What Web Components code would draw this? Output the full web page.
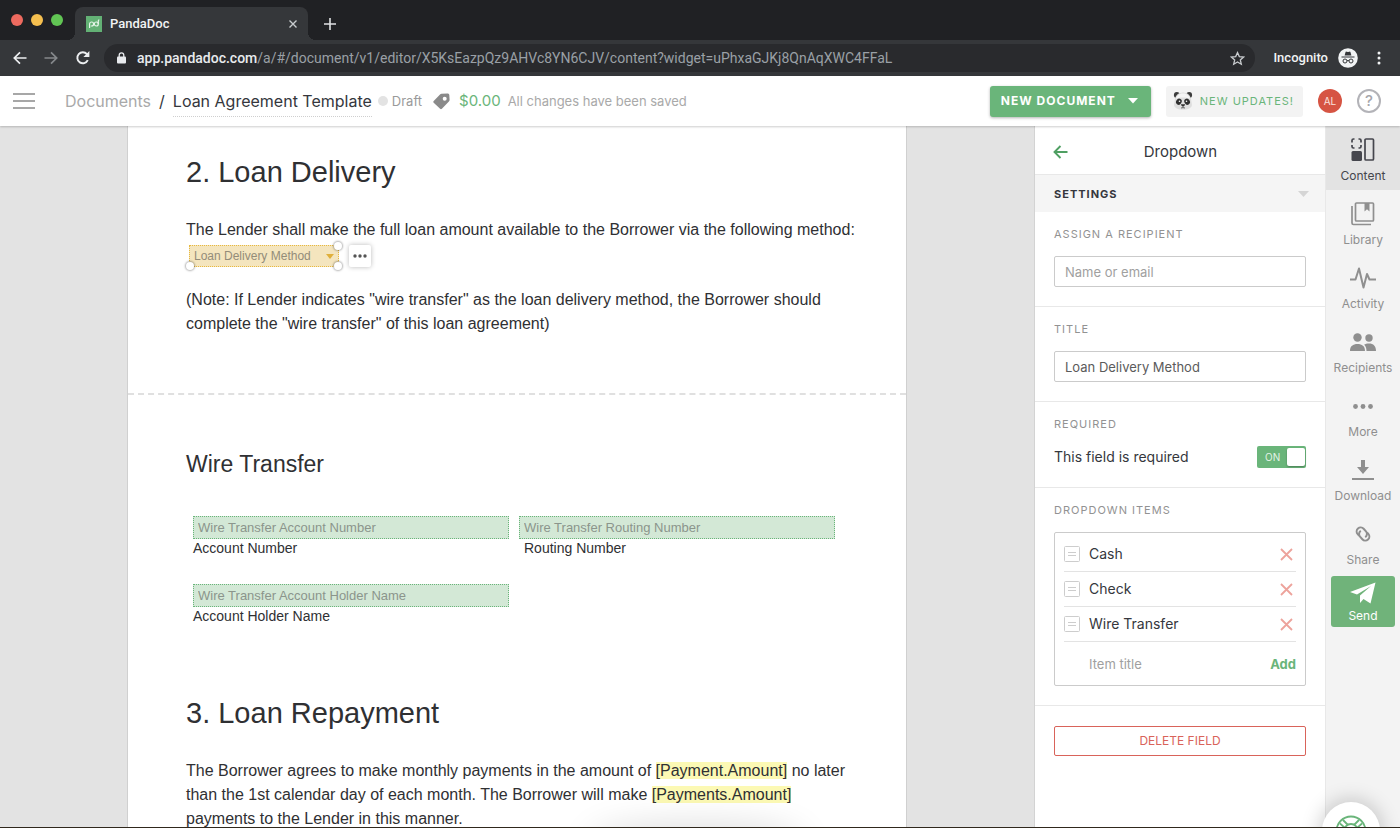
<!DOCTYPE html>
<html lang="en">
<head>
<meta charset="utf-8">
<meta name="viewport" content="width=device-width, initial-scale=1">
<title>PandaDoc</title>
<style>
  :root {
    --green: #6ab57a;
    --grey: #8f8f8f;
    --line: #e8e8e8;
    --ink: #35373d;
    --ui: Inter, "Liberation Sans", sans-serif;
    --chrome: Roboto, "Liberation Sans", sans-serif;
    --doc: "Liberation Sans", Arial, sans-serif;
  }
  html, body { height: 100%; margin: 0; }
  body { background: #30281d; font: 14px/20px var(--ui); color: var(--ink); overflow: hidden; }
</style>
</head>
<body>
<app-window>
  <browser-bar slot="browser" tab-title="PandaDoc" host-name="app.pandadoc.com" path="/a/#/document/v1/editor/X5KsEazpQz9AHVc8YN6CJV/content?widget=uPhxaGJKj8QnAqXWC4FFaL"></browser-bar>
  <app-header slot="header"></app-header>
  <doc-page slot="document"></doc-page>
  <field-panel slot="panel">
    <panel-section label="Assign a recipient"><text-field label="Assign a recipient" placeholder="Name or email"></text-field></panel-section>
    <panel-section label="Title"><text-field label="Title" value="Loan Delivery Method"></text-field></panel-section>
    <panel-section label="Required"><toggle-row>This field is required</toggle-row></panel-section>
    <panel-section label="Dropdown items">
      <item-list>
        <item-row>Cash</item-row>
        <item-row>Check</item-row>
        <item-row>Wire Transfer</item-row>
      </item-list>
    </panel-section>
  </field-panel>
  <nav-rail slot="rail">
    <rail-item icon="content" active>Content</rail-item>
    <rail-item icon="library">Library</rail-item>
    <rail-item icon="activity">Activity</rail-item>
    <rail-item icon="recipients">Recipients</rail-item>
    <rail-item icon="more">More</rail-item>
    <rail-item icon="download">Download</rail-item>
    <rail-item icon="share">Share</rail-item>
    <rail-item icon="send" primary>Send</rail-item>
  </nav-rail>
  <help-bubble slot="help"></help-bubble>
</app-window>

<script>
const RESET = `:host,*{box-sizing:border-box} button,input,select{font:inherit;color:inherit;margin:0} button{border:0;background:none;padding:0;cursor:pointer} svg{display:block;flex:none} a{color:inherit;text-decoration:none}`;

class Base extends HTMLElement {
  constructor() {
    super();
    this.attachShadow({ mode: 'open' });
  }
  connectedCallback() {
    this.shadowRoot.innerHTML = `<style>${RESET}${this.css()}</style>${this.html()}`;
  }
  attr(name) { return this.getAttribute(name) || ''; }
}

customElements.define('app-window', class extends Base {
  css() { return `
    :host{display:flex;flex-direction:column;height:calc(100vh - 1px);background:#e3e3e3;position:relative;overflow:hidden}
    .work{display:flex;flex:1;min-height:0}
    main{flex:1;min-width:0;overflow:hidden;display:flex;justify-content:center;position:relative}
    .glow{position:absolute;left:50%;bottom:-30px;width:200px;height:24px;border-radius:50%;box-shadow:0 0 36px 8px rgba(0,0,0,.14);transform:translateX(80px)}
  `; }
  html() { return `
    <slot name="browser"></slot><slot name="header"></slot>
    <div class="work"><main><slot name="document"></slot><div class="glow"></div></main><slot name="panel"></slot><slot name="rail"></slot></div>
    <slot name="help"></slot>`; }
});

customElements.define('browser-bar', class extends Base {
  css() { return `
    :host{display:block;flex:none;background:#202124;color:#f1f3f4;font-family:var(--chrome)}
    .tabs{display:flex;height:40px;padding:7px 0 0 11px;align-items:stretch}
    .lights{display:flex;gap:8px;padding-top:7px;width:64px}
    .lights i{width:12px;height:12px;border-radius:50%}
    .tab{display:flex;align-items:center;width:233px;padding:0 10px 0 11px;background:#35373a;border-radius:8px 8px 0 0;font-size:13px;font-weight:500;position:relative}
    .tab:before,.tab:after{content:"";position:absolute;bottom:0;width:8px;height:8px}
    .tab:before{left:-8px;background:radial-gradient(circle at 0 0,transparent 8px,#35373a 8px)}
    .tab:after{right:-8px;background:radial-gradient(circle at 100% 0,transparent 8px,#35373a 8px)}
    .fav{margin-right:8px}
    .name{flex:1}
    .plus{margin-left:15px}
    .bar{display:flex;align-items:center;height:36px;background:#35373a;padding:0 13px;}
    .nav{display:flex;gap:17px;width:91px}
    .address{flex:1;min-width:0;display:flex;align-items:center;height:28px;border-radius:14px;background:#292a2d;padding:0 10px 0 12px;font-size:14px;color:#9aa0a6;white-space:nowrap}
    .address b{font-weight:500;color:#e8eaed}
    .url{flex:1;overflow:hidden;padding-left:10px}
    .inc{font-size:13px;font-weight:500;margin:0 10px 0 18px}
    .dots{margin-left:13px}
  `; }
  html() { return `
    <div class="tabs">
      <div class="lights"><i style="background:#ed6a5f"></i><i style="background:#f5bf4f"></i><i style="background:#61c554"></i></div>
      <div class="tab">
        <svg class="fav" width="16" height="16" viewBox="0 0 16 16"><path fill="#63b175" d="M0 0h16v16H0z"/><g fill="none" stroke="#e6f5e9" stroke-width="1.2"><path d="M3.6 12V8a2 2 0 1 1 2 2H4.800"/><circle cx="10.300" cy="8" r="2"/><path d="M12.300 8V4.800c0-.8.300-1 1-1"/></g></svg>
        <span class="name">${this.attr('tab-title')}</span>
        <button aria-label="Close tab"><svg width="10" height="10" viewBox="0 0 10 10"><path d="M1.500 1.500l7 7m0-7l-7 7" stroke="#c9cccf" stroke-width="1.400"/></svg></button>
      </div>
      <button class="plus" aria-label="New tab"><svg width="14" height="14" viewBox="0 0 14 14"><path d="M7 1v12M1 7h12" stroke="#dfe1e3" stroke-width="1.600"/></svg></button>
    </div>
    <div class="bar">
      <div class="nav">
        <button aria-label="Back"><svg width="14" height="16" viewBox="0 0 14 16"><path d="M13.500 8H1.500M7 2.300L1.300 8 7 13.700" fill="none" stroke="#eceef0" stroke-width="1.700"/></svg></button>
        <button aria-label="Forward"><svg width="14" height="16" viewBox="0 0 14 16"><path d="M.5 8h12M7 2.300L12.700 8 7 13.700" fill="none" stroke="#85888b" stroke-width="1.700"/></svg></button>
        <button aria-label="Reload"><svg width="16" height="16" viewBox="0 0 16 16"><path d="M12.800 10.200A5.500 5.500 0 1 1 12 4.200L13.200 5.400" fill="none" stroke="#eceef0" stroke-width="1.900"/><path d="M14.400 1v6H8.400z" fill="#eceef0"/></svg></button>
      </div>
      <div class="address">
        <svg width="11" height="12" viewBox="0 0 11 12"><rect x="1" y="4.500" width="9" height="7" rx="1" fill="#e8eaed"/><path d="M3.200 5V3.200a2.300 2.300 0 0 1 4.600 0V5" fill="none" stroke="#e8eaed" stroke-width="1.300"/></svg>
        <span class="url"><b>${this.attr('host-name')}</b>${this.attr('path')}</span>
        <button aria-label="Bookmark"><svg width="15" height="15" viewBox="0 0 15 15"><path d="M7.500 1.600l1.800 4 4.300.4-3.300 2.900 1 4.300-3.800-2.300-3.800 2.300 1-4.300L1.400 6l4.300-.4z" fill="none" stroke="#c9cccf" stroke-width="1.300"/></svg></button>
      </div>
      <span class="inc">Incognito</span>
      <svg width="20" height="20" viewBox="0 0 20 20"><circle cx="10" cy="10" r="9.800" fill="#f1f3f4"/><path d="M6.600 7.400L7.500 4.200c.1-.5.500-.7 1-.5l1.500.4 1.500-.4c.5-.2.900 0 1 .5l.9 3.200zM3.500 8.400h13v1.100h-13z" fill="#35373a"/><g fill="none" stroke="#35373a"><circle cx="7" cy="13" r="2"/><circle cx="13" cy="13" r="2"/><path d="M9 12.800q1-.7 2 0"/></g></svg>
      <svg class="dots" width="16" height="16" viewBox="0 0 16 16" fill="#f1f3f4"><circle cx="8" cy="3" r="1.500"/><circle cx="8" cy="8" r="1.500"/><circle cx="8" cy="13" r="1.500"/></svg>
    </div>`; }
});

customElements.define('app-header', class extends Base {
  css() { return `
    :host{display:flex;flex:none;align-items:center;height:50px;padding:0 19px 0 13px;background:#fff;box-shadow:0 1px 2px rgba(0,0,0,.2);position:relative;z-index:2;white-space:nowrap}
    .crumb{margin-left:30px;font-size:16px;color:#a9a9a9}
    .sep{margin:0 8px;font-size:16px}
    h1{margin:0;font-size:16px;font-weight:400;line-height:32px;height:32px;border-bottom:1px dotted #cfcfcf}
    .status{display:flex;align-items:center;gap:4px;margin-left:6px;font-size:13px;color:#9a9a9a}
    .status i{width:10px;height:10px;border-radius:50%;background:#e3e3e3}
    .tag{margin-left:11px}
    .price{margin-left:9px;font-size:15px;color:var(--green)}
    .saved{margin-left:7px;font-size:13px;color:#a9a9a9;flex:1}
    .new{display:flex;align-items:center;gap:12px;height:31px;padding:0 13px 0 11px;background:var(--green);border-radius:3px;color:#fff;font-size:12px;font-weight:700;letter-spacing:1px;box-shadow:0 1px 3px rgba(0,0,0,.3)}
    .upd{display:flex;align-items:center;gap:7px;height:31px;margin-left:15px;padding:0 9px 0 7px;background:#f3f3f3;border-radius:3px;color:var(--green);font-size:11px;letter-spacing:1px}
    .me{width:24px;height:24px;margin-left:15px;border-radius:50%;background:#d65443;color:#fbe3df;font-size:10px}
    .q{width:24px;height:24px;margin-left:15px;border:2px solid #b3b3b8;border-radius:50%;color:#a6a6ab;font-size:15px;font-weight:500;line-height:20px}
  `; }
  html() { return `
    <button aria-label="Menu"><svg width="22" height="18" viewBox="0 0 22 18"><path d="M0 2h22M0 9h22M0 16h22" stroke="#8a8a8a" stroke-width="1.700"/></svg></button>
    <a class="crumb" href="#documents">Documents</a><span class="sep">/</span><h1>Loan Agreement Template</h1>
    <span class="status"><i></i>Draft</span>
    <svg class="tag" width="17" height="17" viewBox="0 0 17 17"><path fill-rule="evenodd" d="M8.500.8l6-.3c1 0 1.600.5 1.800 1.500l.3 4.800c0 .7-.2 1.200-.7 1.700l-7 7.200c-.6.600-1.200.6-1.800 0L.7 9.700c-.6-.6-.6-1.200 0-1.800L7 1.500c.4-.4.900-.7 1.500-.7zm3.200 3a2 2 0 1 0 0 4 2 2 0 0 0 0-4z" fill="#8a8a8a"/></svg>
    <span class="price">$0.00</span><span class="saved">All changes have been saved</span>
    <button class="new">NEW DOCUMENT<svg width="10" height="6" viewBox="0 0 10 6"><path d="M0 0h10L5 5.500z" fill="#fff"/></svg></button>
    <button class="upd"><svg width="20" height="20" viewBox="0 0 20 20"><g fill="#3c3c3c"><circle cx="3.800" cy="4" r="2.900"/><circle cx="16.200" cy="4" r="2.900"/></g><path d="M10 1.500c4.900 0 8 3.500 8.300 8.200.2 2.500 1 3.500.5 5C18 17.400 14 18.700 10 18.700S2 17.400 1.200 14.700c-.5-1.500.3-2.500.5-5C2 5 5.100 1.500 10 1.500z" fill="#dedede"/><path d="M10 2.500c4 0 6.500 2.500 7 5.500-2-2-12-2-14 0 .5-3 3-5.500 7-5.500z" fill="#f5f5f5"/><g fill="#303030"><ellipse cx="5.900" cy="10.700" rx="2.700" ry="3.200" transform="rotate(30 5.900 10.700)"/><ellipse cx="14.100" cy="10.700" rx="2.700" ry="3.200" transform="rotate(-30 14.100 10.700)"/><path d="M8 13.200h4c0 1.400-1 2-2 2s-2-.6-2-2z"/></g><path d="M10 15v1.500m-2 .3q1 .6 2-.3 1 .900 2 .3" fill="none" stroke="#444" stroke-width=".8"/><circle cx="6.500" cy="10.200" r=".8" fill="#fff"/><circle cx="13.500" cy="10.200" r=".8" fill="#fff"/></svg>NEW UPDATES!</button>
    <button class="me">AL</button>
    <button class="q" aria-label="Help">?</button>`; }
});

customElements.define('doc-page', class extends Base {
  css() { return `
    :host{display:block;width:780px;max-width:100%;padding:26px 48px 0 58px;background:#fff;border:solid #d0d0d0;border-width:0 1px;font:16px/24px var(--doc);color:#2f3033}
    h2{margin:0;font-size:29px;font-weight:400;line-height:40px}
    h3{margin:53px 0 36px;font-size:23px;font-weight:400;line-height:32px}
    p{margin:26px 0 0}
    h2.next{margin-top:68px}
    .pick{display:flex;align-items:flex-start;gap:10px;margin:3px 0 0 3px;height:23px}
    .note{margin-top:20px}
    hr{margin:57px -48px 0 -58px;border:0;border-top:2px dashed #e0e0e0}
    .grid{display:grid;grid-template-columns:repeat(auto-fill,316px);gap:27px 10px;margin-left:7px}
    mark{background:#fcf9b4;color:inherit}
  `; }
  html() { return `
    <h2>2. Loan Delivery</h2>
    <p>The Lender shall make the full loan amount available to the Borrower via the following method:</p>
    <div class="pick"><doc-dropdown label="Loan Delivery Method"></doc-dropdown><more-button></more-button></div>
    <p class="note">(Note: If Lender indicates "wire transfer" as the loan delivery method, the Borrower should complete the "wire transfer" of this loan agreement)</p>
    <hr>
    <h3>Wire Transfer</h3>
    <div class="grid">
      <doc-field placeholder="Wire Transfer Account Number">Account Number</doc-field>
      <doc-field placeholder="Wire Transfer Routing Number" indent>Routing Number</doc-field>
      <doc-field placeholder="Wire Transfer Account Holder Name">Account Holder Name</doc-field>
    </div>
    <h2 class="next">3. Loan Repayment</h2>
    <p>The Borrower agrees to make monthly payments in the amount of <mark>[Payment.Amount]</mark> no later than the 1st calendar day of each month. The Borrower will make <mark>[Payments.Amount]</mark> payments to the Lender in this manner.</p>`; }
});

customElements.define('doc-dropdown', class extends Base {
  css() { return `
    :host{display:block;position:relative;width:150px;height:22px}
    select{display:block;appearance:none;width:100%;height:22px;padding:0 4px;border:1px dotted #e8b93f;border-radius:0;background:#f4e5be;color:#938c79;font:12px/18px var(--doc)}
    svg{position:absolute;right:5px;top:9px;pointer-events:none}
    i{position:absolute;width:8px;height:8px;border-radius:50%;background:#fff;box-shadow:0 0 2px 1px rgba(0,0,0,.3)}
    .a{right:-3px;top:-3px}.b{right:-3px;bottom:-3px}.c{left:-3px;bottom:-3px}
  `; }
  html() { return `<select aria-label="${this.attr('label')}"><option>${this.attr('label')}</option></select>
    <svg width="8" height="5" viewBox="0 0 8 5"><path d="M0 0h8L4 5z" fill="#e0b03c"/></svg><i class="a"></i><i class="b"></i><i class="c"></i>`; }
});

customElements.define('more-button', class extends Base {
  css() { return `:host{display:block} button{display:grid;place-items:center;width:22px;height:22px;background:#fff;border-radius:2px;box-shadow:0 0 5px rgba(0,0,0,.28)}`; }
  html() { return `<button aria-label="Field options"><svg width="14" height="4" viewBox="0 0 14 4" fill="#555"><circle cx="2" cy="2" r="1.700"/><circle cx="7" cy="2" r="1.700"/><circle cx="12" cy="2" r="1.700"/></svg></button>`; }
});

customElements.define('doc-field', class extends Base {
  css() { return `
    :host{display:block}
    label{display:block;font-size:14px;line-height:18px}
    input{display:block;width:100%;height:23px;padding:0 4px;border:1px dotted #6ab57a;background:#d3e8d6;font-size:13px;line-height:18px}
    input::placeholder{color:#8b958c;opacity:1}
    :host([indent]) span{padding-left:5px}
  `; }
  html() { return `<label><input placeholder="${this.attr('placeholder')}"><span><slot></slot></span></label>`; }
});

customElements.define('field-panel', class extends Base {
  css() { return `
    :host{display:block;flex:none;width:292px;background:#fff;border-left:1px solid #d3d3d3;border-right:1px solid var(--line);overflow:hidden}
    header{display:flex;align-items:center;height:49px;padding:3px 18px 0;border-bottom:1px solid var(--line);font-size:15px}
    h2{flex:1;margin:0;padding-right:14px;text-align:center;font-size:15px;font-weight:400}
    .set{display:flex;align-items:center;justify-content:space-between;width:100%;height:37px;padding:0 16px 0 19px;background:#f5f5f5;font-size:11px;font-weight:700;letter-spacing:1px}
    .del{display:block;width:calc(100% - 38px);height:30px;margin:20px 19px;border:1px solid #d9635a;border-radius:2px;color:#d9635a;font-size:12px}
  `; }
  html() { return `
    <header><button aria-label="Back"><svg width="15" height="14" viewBox="0 0 15 14"><path d="M14.500 7H1.500M7.500 1L1.500 7l6 6" fill="none" stroke="#4f9f62" stroke-width="1.900"/></svg></button><h2>Dropdown</h2></header>
    <button class="set">SETTINGS<svg width="11" height="6" viewBox="0 0 11 6"><path d="M0 0h11L5.500 6z" fill="#d5d5d5"/></svg></button>
    <slot></slot>
    <button class="del">DELETE FIELD</button>`; }
});

customElements.define('panel-section', class extends Base {
  css() { return `
    :host{display:block;padding:14px 19px 19px;border-bottom:1px solid var(--line)}
    h3{margin:0 0 14px;font-size:11px;line-height:16px;font-weight:400;letter-spacing:1px;color:#929292}
  `; }
  html() { return `<h3>${this.attr('label').toUpperCase()}</h3><slot></slot>`; }
});

customElements.define('text-field', class extends Base {
  css() { return `
    :host{display:block}
    input{display:block;width:100%;height:31px;padding:0 10px;border:1px solid #cbcbcb;border-radius:2px;background:#fff;font-size:13px;color:#5b5b5b}
    input::placeholder{color:#a0a0a0;opacity:1}
  `; }
  html() { return `<input aria-label="${this.attr('label')}" placeholder="${this.attr('placeholder')}" value="${this.attr('value')}">`; }
});

customElements.define('toggle-row', class extends Base {
  css() { return `
    :host{display:block}
    label{display:flex;align-items:center;justify-content:space-between;height:22px;font-size:14px}
    .sw{position:relative;display:flex;align-items:center;width:49px;height:22px;padding-left:8px;background:var(--green);border-radius:2px;color:#e4f3e7;font-size:10px}
    input{appearance:none;position:absolute;right:1px;top:2px;width:18px;height:18px;background:#fff;border-radius:2px;box-shadow:0 1px 2px rgba(0,0,0,.3)}
  `; }
  html() { return `<label><span><slot></slot></span><span class="sw">ON<input type="checkbox" checked></span></label>`; }
});

customElements.define('item-list', class extends Base {
  css() { return `
    :host{display:block;padding:4px 9px 0;border:1px solid #cbcbcb;border-radius:2px}
    .add{display:flex;align-items:center;height:43px;padding-left:25px}
    input{flex:1;min-width:0;padding:0;border:0;font-size:13px;background:none}
    input::placeholder{color:#a0a0a0;opacity:1}
    button{font-size:13px;font-weight:700;color:var(--green)}
  `; }
  html() { return `<slot></slot><div class="add"><input aria-label="Item title" placeholder="Item title"><button>Add</button></div>`; }
});

customElements.define('item-row', class extends Base {
  css() { return `
    :host{display:flex;align-items:center;height:35px;border-bottom:1px solid #e3e3e3;font-size:14px}
    span{flex:1;padding-left:9px}
    button{margin-right:3px}
  `; }
  html() { return `<svg width="16" height="16" viewBox="0 0 16 16"><rect x=".5" y=".5" width="15" height="15" rx="1" fill="#fff" stroke="#cdcdcd"/><path d="M4 6.500h8M4 9.500h8" stroke="#cdcdcd"/></svg><span><slot></slot></span>
    <button aria-label="Remove item"><svg width="13" height="13" viewBox="0 0 13 13"><path d="M1 1l11 11M12 1L1 12" stroke="#eda39c" stroke-width="1.800"/></svg></button>`; }
});

customElements.define('nav-rail', class extends Base {
  css() { return `:host{display:block;flex:none;width:74px;background:#f3f3f3}`; }
  html() { return `<nav><slot></slot></nav>`; }
});

const ICONS = {
  content: '<g fill="none" stroke="currentColor" stroke-width="1.700"><rect x="15" y="2" width="8.500" height="21" rx="1"/><path d="M2 5.500V3.500Q2 2 3.500 2H4.500M8.500 2h1q1.500 0 1.500 1.500v2M11 8v1.500q0 1.500-1.500 1.500h-1M4.500 11h-1Q2 11 2 9.500V8"/></g><rect x="1.500" y="14" width="10.500" height="10" rx="1.500" fill="currentColor"/>',
  library: '<g fill="none" stroke="currentColor" stroke-width="1.700"><rect x="5.500" y="2" width="18" height="18" rx="1"/><path d="M2 5v17q0 1.500 1.500 1.500H21"/></g><path d="M14.500 2h5v8.500L17 8.200l-2.500 2.300z" fill="currentColor"/>',
  activity: '<path d="M0 14.500H5.500L9 3.500l4.500 19L17 9l2.500 5.500H26" fill="none" stroke="currentColor" stroke-width="2" stroke-linejoin="round"/>',
  recipients: '<g fill="currentColor"><circle cx="7.500" cy="8.500" r="4.200"/><circle cx="19" cy="9" r="3.700"/><path d="M0 22c0-5 3-7 7.500-7s7.500 2 7.500 7zM16.500 22c0-3-.9-5-2.400-6.300 1.200-.9 2.900-1.200 4.900-1.200 4.500 0 7 2.500 7 7.500z"/></g>',
  more: '<g fill="currentColor"><circle cx="5.500" cy="13.500" r="2.400"/><circle cx="13" cy="13.500" r="2.400"/><circle cx="20.500" cy="13.500" r="2.400"/></g>',
  download: '<path d="M11 3h4v7h4l-6 7-6-7h4zM2 21h22v2H2z" fill="currentColor"/>',
  share: '<g transform="rotate(48 13 13)" fill="none" stroke="currentColor" stroke-width="2"><path d="M11.500 17H9.500a4 4 0 0 1 0-8H13a4 4 0 0 1 3.900 4.500"/><path d="M14.500 9H16.500a4 4 0 0 1 0 8H13a4 4 0 0 1-3.900-4.500"/></g>',
  send: '<path d="M0 11L25.500 1.500 20.500 22.500 13.500 18 10 22V14.500L21 5 7 13.500z" fill="currentColor"/>'
};

customElements.define('rail-item', class extends Base {
  css() { return `
    :host{display:block}
    button{display:flex;flex-direction:column;align-items:center;gap:4px;width:100%;height:64px;padding-top:11px;color:#8f8f8f;font-size:12px;line-height:18px}
    :host([active]) button{background:#e3e3e3;color:#45464d}
    :host([primary]){margin:2px 5px 0}
    :host([primary]) button{height:51px;padding-top:5px;gap:0;background:#70b37a;border-radius:3px;color:#fff}
  `; }
  html() { return `<button><svg width="26" height="26" viewBox="0 0 26 26">${ICONS[this.attr('icon')]}</svg><slot></slot></button>`; }
});

customElements.define('help-bubble', class extends Base {
  css() { return `
    :host{display:block;position:absolute;right:20px;bottom:-33px;z-index:3}
    button{display:grid;place-items:center;width:58px;height:58px;border-radius:50%;background:#fff;box-shadow:0 0 20px 2px rgba(0,0,0,.2)}
  `; }
  html() { return `<button aria-label="Support"><svg width="32" height="32" viewBox="0 0 32 32"><g fill="none" stroke="#6ab57a" stroke-width="1.800"><circle cx="16" cy="16" r="14.500"/><circle cx="16" cy="16" r="7"/><path d="M5 8.500l5 4.500M8 5l5 5M24 5l-5 5M27 8.500L22 13M5 23.500L10 19M8 27l5-5M24 27l-5-5M27 23.500L22 19"/></g></svg></button>`; }
});
</script>
</body>
</html>
